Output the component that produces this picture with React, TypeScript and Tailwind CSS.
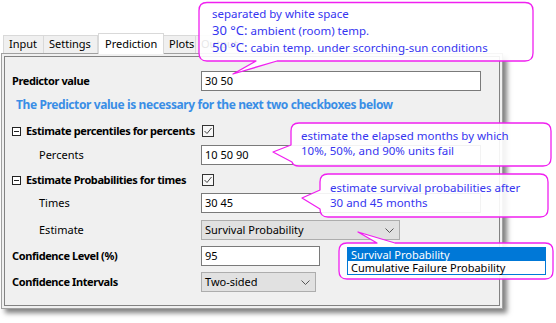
import type { ReactNode } from "react";

const ui = "font-['Noto_Sans',sans-serif]";

function Chevron() {
  return (
    <svg width="9" height="5" viewBox="0 0 9 5" className="shrink-0">
      <path d="M0.5 0.5 L4.5 4.5 L8.5 0.5" fill="none" stroke="#555" strokeWidth="1" />
    </svg>
  );
}

function Checkbox() {
  return (
    <div className="ml-[1px] w-[12px] h-[12px] border border-[#333] bg-[#f7f7f7] flex items-center justify-center">
      <svg width="10" height="10" viewBox="0 0 10 10">
        <path d="M1.5 5 L4 7.5 L8.5 2" fill="none" stroke="#444" strokeWidth="1" />
      </svg>
    </div>
  );
}

function Collapse() {
  return (
    <div className="w-[9px] h-[9px] border border-[#222] bg-white flex items-center justify-center">
      <div className="w-[5px] h-px bg-[#222]" />
    </div>
  );
}

function TextBox({ value, width }: { value: string; width: string }) {
  return (
    <div className={`h-[20px] ${width} border border-[#7a7a7a] bg-white px-[3px] flex items-center text-[11px] text-black`}>
      {value}
    </div>
  );
}

function Combo({ value, width }: { value: string; width: string }) {
  return (
    <div className={`h-[20px] ${width} border border-[#adadad] bg-[#e1e1e1] pl-[3px] pr-[5px] flex items-center justify-between text-[11px] text-black`}>
      <span>{value}</span>
      <Chevron />
    </div>
  );
}

function Row({ label, className, children }: { label: ReactNode; className: string; children: ReactNode }) {
  return (
    <div className={`flex items-center h-[20px] ${className}`}>
      <div className="w-[189px] shrink-0 text-[11px] text-black">{label}</div>
      {children}
    </div>
  );
}

const tabs = [
  { name: "Input", w: "w-[41px] border-l" },
  { name: "Settings", w: "w-[54px]" },
  { name: "Prediction", w: "w-[66px]" },
  { name: "Plots", w: "w-[32px]" },
  { name: "Output", w: "w-[48px]" },
];

export default function App() {
  return (
    <div className={`relative w-[556px] h-[323px] bg-white overflow-hidden ${ui}`}>
      <div className="pt-[33px] pl-[1px]">
        <div className="flex items-end h-[20px] pl-[2px]">
          {tabs.map((t) =>
            t.name === "Prediction" ? (
              <div
                key={t.name}
                className={`relative z-10 -mb-px h-[21px] ${t.w} pl-[6px] bg-white border border-b-0 border-[#d9d9d9] flex items-center text-[11px] text-black`}
              >
                {t.name}
              </div>
            ) : (
              <div
                key={t.name}
                className={`h-[18px] ${t.w} pl-[5px] bg-[#f0f0f0] border-t border-r border-[#d9d9d9] flex items-center text-[11px] text-black`}
              >
                {t.name}
              </div>
            )
          )}
        </div>
        <div className="w-[502px] h-[256px] border border-[#a0a0a0] bg-[#f0f0f0] p-[2px] shadow-[4px_4px_5px_rgba(0,0,0,0.5)]">
          <div className="h-full border border-[#828282] pl-[7px] flex flex-col">
            <Row label={<span className="font-bold tracking-[-0.4px]">Predictor value</span>} className="mt-[14px]">
              <TextBox value="30 50" width="w-[280px]" />
            </Row>
            <div className="mt-[6px] ml-[4px] h-[16px] flex items-center text-[12px] font-bold tracking-[-0.4px] text-[#3a8ee6]">
              The Predictor value is necessary for the next two checkboxes below
            </div>
            <Row
              label={
                <div className="flex items-center gap-[5px]">
                  <Collapse />
                  <span className="font-bold tracking-[-0.4px]">Estimate percentiles for percents</span>
                </div>
              }
              className="mt-[8px]"
            >
              <Checkbox />
            </Row>
            <Row label={<span className="pl-[27px]">Percents</span>} className="mt-[4px]">
              <TextBox value="10 50 90" width="w-[280px]" />
            </Row>
            <Row
              label={
                <div className="flex items-center gap-[5px]">
                  <Collapse />
                  <span className="font-bold tracking-[-0.4px]">Estimate Probabilities for times</span>
                </div>
              }
              className="mt-[5px]"
            >
              <Checkbox />
            </Row>
            <Row label={<span className="pl-[27px]">Times</span>} className="mt-[3px]">
              <TextBox value="30 45" width="w-[280px]" />
            </Row>
            <Row label={<span className="pl-[27px]">Estimate</span>} className="mt-[7px]">
              <Combo value="Survival Probability" width="w-[199px]" />
            </Row>
            <Row label={<span className="font-bold tracking-[-0.4px]">Confidence Level (%)</span>} className="mt-[6px]">
              <TextBox value="95" width="w-[119px]" />
            </Row>
            <Row label={<span className="font-bold tracking-[-0.4px]">Confidence Intervals</span>} className="mt-[6px]">
              <Combo value="Two-sided" width="w-[115px]" />
            </Row>
          </div>
        </div>
      </div>

      <svg className="absolute left-0 top-0 pointer-events-none" width="556" height="323" viewBox="0 0 556 323">
        <g fill="rgba(255,255,255,0.9)" stroke="#f020f0" strokeWidth="1.3" strokeLinejoin="round">
          <path d="M207 2.5 H525 Q533 2.5 533 10.5 V53 Q533 61 525 61 H277 L233 74 L256 61 H207 Q199 61 199 53 V10.5 Q199 2.5 207 2.5 Z" />
          <path d="M299 123 H543 Q551 123 551 131 V158 Q551 166 543 166 H299 Q293 166 292 162 L273 152 L291 145 V131 Q291 123 299 123 Z" />
          <path d="M328 174 H540 Q548 174 548 182 V209 Q548 217 540 217 H328 Q320 217 320 209 L302 198 L320 190 V182 Q320 174 328 174 Z" />
          <path d="M347 243 H377 L358 232 L395 243 H545 Q553 243 553 251 V271 Q553 279 545 279 H347 Q339 279 339 271 V251 Q339 243 347 243 Z" />
        </g>
      </svg>

      <div className="absolute left-[212px] top-[6px] text-[11.5px] leading-[16px] text-[#3535f0] whitespace-nowrap">
        <div>separated by white space</div>
        <div>
          <span className="text-[13px]">30 °C:</span> ambient (room) temp.
        </div>
        <div>
          <span className="text-[13px]">50 °C:</span> cabin temp. under scorching-sun conditions
        </div>
      </div>

      <div className="absolute left-[301px] top-[128px] text-[11.5px] leading-[15px] text-[#3535f0] whitespace-nowrap">
        <div>estimate the elapsed months by which</div>
        <div>10%, 50%, and 90% units fail</div>
      </div>

      <div className="absolute left-[330px] top-[180px] text-[11.5px] leading-[15px] text-[#3535f0] whitespace-nowrap">
        <div>estimate survival probabilities after</div>
        <div>30 and 45 months</div>
      </div>

      <div className="absolute left-[347px] top-[247px] w-[199px] border border-[#0078d7] bg-white text-[11px] leading-[13px]">
        <div className="bg-[#0078d7] text-white pl-[3px]">Survival Probability</div>
        <div className="text-black pl-[3px]">Cumulative Failure Probability</div>
      </div>
    </div>
  );
}
